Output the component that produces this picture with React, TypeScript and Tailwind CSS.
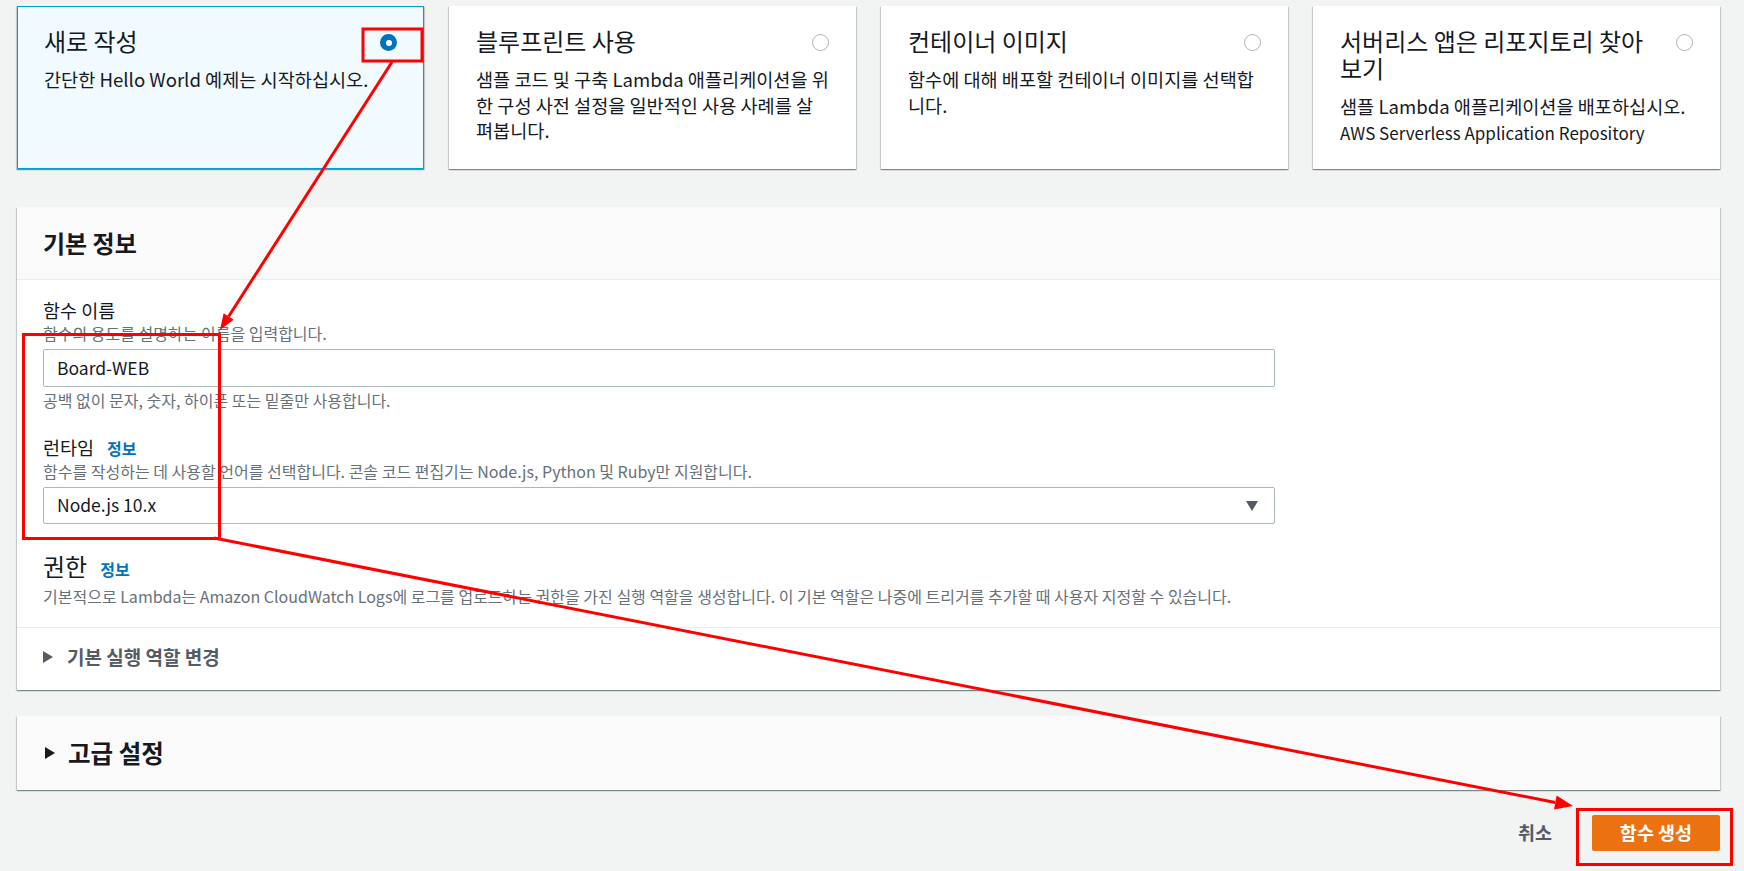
const font = { fontFamily: '"Noto Sans CJK KR", "Noto Sans", sans-serif' };

type Tile = { title: React.ReactNode; desc: React.ReactNode; selected?: boolean };

const tiles: Tile[] = [
  { title: "새로 작성", desc: "간단한 Hello World 예제는 시작하십시오.", selected: true },
  { title: "블루프린트 사용", desc: "샘플 코드 및 구축 Lambda 애플리케이션을 위한 구성 사전 설정을 일반적인 사용 사례를 살펴봅니다." },
  { title: "컨테이너 이미지", desc: "함수에 대해 배포할 컨테이너 이미지를 선택합니다." },
  {
    title: (
      <>
        서버리스 앱은 리포지토리 찾아
        <br />
        보기
      </>
    ),
    desc: (
      <>
        샘플 Lambda 애플리케이션을 배포하십시오.
        <br />
        <span className="text-[17px]">AWS Serverless Application Repository</span>
      </>
    ),
  },
];

const shadow =
  "shadow-[0_1px_1px_0_rgba(0,28,36,0.3),1px_1px_1px_0_rgba(0,28,36,0.15),-1px_1px_1px_0_rgba(0,28,36,0.15)]";

function Radio({ on }: { on?: boolean }) {
  if (on)
    return (
      <span className="mt-[7px] flex h-[17px] w-[17px] shrink-0 items-center justify-center rounded-full bg-[#0073bb]">
        <span className="h-[6px] w-[6px] rounded-full bg-white" />
      </span>
    );
  return <span className="mt-[7px] h-[17px] w-[17px] shrink-0 rounded-full border-[1.5px] border-[#aab7b8] bg-white" />;
}

function Tri({ color }: { color: string }) {
  return (
    <svg width="10" height="12" viewBox="0 0 10 12" className="shrink-0">
      <path d="M0 0 L10 6 L0 12 Z" fill={color} />
    </svg>
  );
}

export default function App() {
  return (
    <div style={font} className="relative h-[871px] overflow-hidden bg-[#f2f3f3] pl-[17px] pr-[24px] pt-[6px] text-[#16191f]">
      {/* selection tiles */}
      <div className="grid grid-cols-4 gap-[25px]">
        {tiles.map((t, i) => (
          <div
            key={i}
            className={`h-[163px] border px-[26px] pt-[20px] ${shadow} ${
              t.selected ? "border-[#00a1c9] bg-[#f1faff]" : "border-transparent bg-white"
            }`}
          >
            <div className="flex items-start justify-between gap-[8px]">
              <div className="whitespace-nowrap text-[24px] leading-[27px]">{t.title}</div>
              <Radio on={t.selected} />
            </div>
            <div className="mt-[12px] break-all text-[18.6px] leading-[25.5px]">{t.desc}</div>
          </div>
        ))}
      </div>

      {/* basic info */}
      <div className={`mt-[38px] bg-white ${shadow}`}>
        <div className="flex h-[73px] items-center border-b border-[#eaeded] bg-[#fafafa] px-[26px]">
          <h2 className="text-[24px] font-bold">기본 정보</h2>
        </div>
        <div className="px-[26px] pb-[21px] pt-[18px]">
          <div className="text-[18.5px] leading-[24px]">함수 이름</div>
          <div className="mt-[1px] text-[16px] leading-[20px] text-[#687078]">함수의 용도를 설명하는 이름을 입력합니다.</div>
          <div className="mt-[6px] flex h-[38px] w-[1232px] items-center rounded-[2px] border border-[#aab7b8] px-[13px] text-[17.5px]">
            Board-WEB
          </div>
          <div className="mt-[3px] text-[16px] leading-[20px] text-[#687078]">공백 없이 문자, 숫자, 하이픈 또는 밑줄만 사용합니다.</div>

          <div className="mt-[25px] flex items-baseline gap-[13px] leading-[24px]">
            <span className="text-[18.5px]">런타임</span>
            <span className="text-[16px] font-bold text-[#0073bb]">정보</span>
          </div>
          <div className="mt-[1px] text-[16px] leading-[20px] text-[#687078]">
            함수를 작성하는 데 사용할 언어를 선택합니다. 콘솔 코드 편집기는 Node.js, Python 및 Ruby만 지원합니다.
          </div>
          <div className="mt-[6px] flex h-[37px] w-[1232px] items-center justify-between rounded-[2px] border border-[#aab7b8] pl-[13px] pr-[16px] text-[17.5px]">
            <span>Node.js 10.x</span>
            <svg width="12" height="10" viewBox="0 0 12 10">
              <path d="M0 0 H12 L6 10 Z" fill="#545b64" />
            </svg>
          </div>

          <div className="mt-[28px] flex items-baseline gap-[13px] leading-[28px]">
            <span className="text-[24px]">권한</span>
            <span className="text-[16px] font-bold text-[#0073bb]">정보</span>
          </div>
          <div className="mt-[3px] text-[16px] leading-[20px] text-[#687078]">
            기본적으로 Lambda는 Amazon CloudWatch Logs에 로그를 업로드하는 권한을 가진 실행 역할을 생성합니다. 이 기본 역할은 나중에 트리거를 추가할 때 사용자 지정할 수 있습니다.
          </div>
        </div>
        <div className="flex h-[63px] items-center gap-[14px] border-t border-[#eaeded] px-[26px] pb-[4px]">
          <Tri color="#545b64" />
          <span className="text-[19px] font-bold text-[#545b64]">기본 실행 역할 변경</span>
        </div>
      </div>

      {/* advanced */}
      <div className={`mt-[26px] flex h-[74px] items-center gap-[13px] bg-[#fafafa] px-[28px] ${shadow}`}>
        <Tri color="#16191f" />
        <span className="text-[24.5px] font-bold">고급 설정</span>
      </div>

      {/* actions */}
      <div className="mt-[25px] flex items-center justify-end gap-[40px]">
        <button className="text-[18.5px] font-bold text-[#545b64]">취소</button>
        <button className="h-[36px] w-[128px] rounded-[2px] bg-[#ec7211] text-[18.5px] font-bold text-white">함수 생성</button>
      </div>

      {/* red annotations */}
      <svg className="pointer-events-none absolute left-0 top-0" width="1744" height="871" viewBox="0 0 1744 871">
        <g fill="none" stroke="#ff0000" strokeWidth="3">
          <rect x="363" y="29" width="59" height="32" />
          <rect x="23.5" y="334.5" width="196" height="204" />
          <rect x="1577.5" y="809.5" width="154" height="55" />
          <line x1="392" y1="62" x2="228.6" y2="316.5" />
          <line x1="214" y1="538" x2="1555.3" y2="802.5" />
        </g>
        <g fill="#ff0000">
          <polygon points="220,330 233.7,319.8 223.6,313.3" />
          <polygon points="1573,806 1554,809.4 1556.7,795.6" />
        </g>
      </svg>
    </div>
  );
}
